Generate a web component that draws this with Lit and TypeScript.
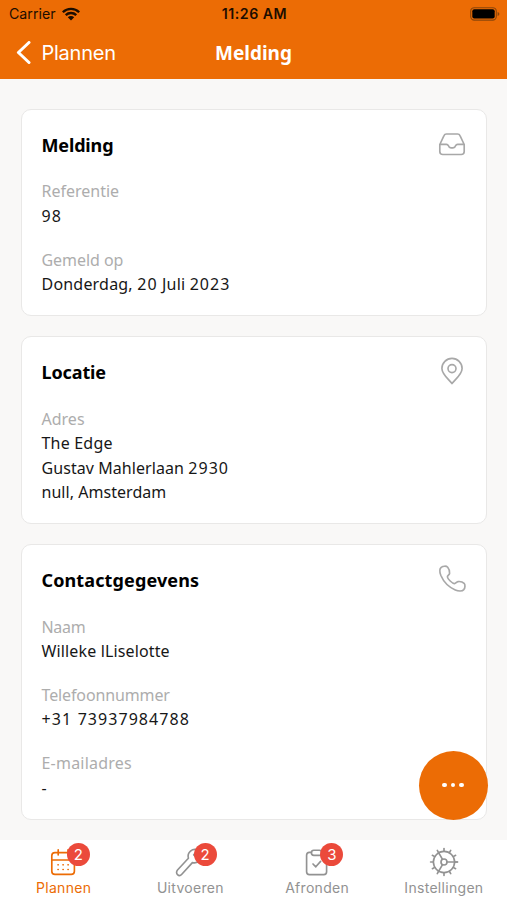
import { LitElement, html, css, svg } from "lit";
import { customElement, property } from "lit/decorators.js";
import { classMap } from "lit/directives/class-map.js";
import { styleMap } from "lit/directives/style-map.js";

/** A run of text with its tracking in pixels. */
interface Run { text: string; track: number }
interface Field { label: Run; lines: Run[] }
interface Section { title: Run; icon: string; fields: Field[] }
interface Tab { label: string; icon: string; badge?: number; active?: boolean }

const run = (text: string, track = 0): Run => ({ text, track });

const sections: Section[] = [
  {
    title: run("Melding", -0.15), icon: "inbox", fields: [
      { label: run("Referentie"), lines: [run("98")] },
      { label: run("Gemeld op", -0.05), lines: [run("Donderdag, 20 Juli 2023", 0.2)] },
    ],
  },
  {
    title: run("Locatie", -0.12), icon: "pin", fields: [
      { label: run("Adres"), lines: [run("The Edge", 0.2), run("Gustav Mahlerlaan 2930", 0.07), run("null, Amsterdam", 0.04)] },
    ],
  },
  {
    title: run("Contactgegevens", 0.12), icon: "phone", fields: [
      { label: run("Naam", -0.3), lines: [run("Willeke lLiselotte", 0.14)] },
      { label: run("Telefoonnummer", -0.12), lines: [run("+31 73937984788", 1.2)] },
      { label: run("E-mailadres", 0.22), lines: [run("-")] },
    ],
  },
];

const tabs: Tab[] = [
  { label: "Plannen", icon: "calendar", badge: 2, active: true },
  { label: "Uitvoeren", icon: "wrench", badge: 2 },
  { label: "Afronden", icon: "clipboard", badge: 3 },
  { label: "Instellingen", icon: "gear" },
];

const teeth = Array.from({ length: 12 }, (_, i) => i * 30);

const icons: Record<string, unknown> = {
  inbox: svg`<path d="M1.8 14.5 6 5.6Q6.7 4 8.4 4H19.6Q21.3 4 22 5.6L26.2 14.5V21.5Q26.2 24.5 23.2 24.5H4.8Q1.8 24.5 1.8 21.5ZM1.8 14.3H8.4Q9.8 14.3 10.3 15.6Q11 17.9 13 17.9H15Q17 17.9 17.7 15.6Q18.2 14.3 19.6 14.3H26.2"/>`,
  pin: svg`<path d="M14 26.6C11 22.5 3.9 17.2 3.9 11.4A10.1 10 0 0 1 24.1 11.4C24.1 17.2 17 22.5 14 26.6Z"/><circle cx="14" cy="11.6" r="4"/>`,
  phone: svg`<path d="M3.2 2.3C5 .9 8.4 .8 9.7 2.2C11 3.8 11.8 6.5 11.6 8.3C11.4 10 9.2 10.4 9.4 12C9.7 14.1 14.2 18.4 16.4 18.6C17.9 18.7 18.3 16.8 20 16.6C22 16.4 24.9 17.1 26.1 18.3C27.4 19.8 27.2 22.9 25.8 24.6C24.3 26.3 20.5 26.4 17.3 25C10.4 21.9 5.7 17.1 2.9 10.5C1.6 7.2 1.5 3.7 3.2 2.3Z"/>`,
  calendar: svg`<rect x="2.8" y="4.6" width="22.6" height="21.8" rx="3.2"/><path d="M2.8 12H25.4M9.2 1.8V7M19 1.8V7"/><path d="M9 16.8h.2m4.8 0h.2m4.8 0h.2M9 21.5h.2m4.8 0h.2m4.8 0h.2"/>`,
  wrench: svg`<path d="M24.6 4.8 20.2 9.1 17.7 6.8 21.9 2.1C16.4-.1 10.8 4.2 12.4 10.3L1.5 22C.2 23.5.3 25.6 1.5 26.6C2.8 27.8 4.6 27.6 5.8 26.3L16.4 14.6C22.6 16 27 10.5 24.6 4.8Z"/>`,
  clipboard: svg`<path d="M8.4 4.4H6.4Q3.6 4.4 3.6 7.2V23.8Q3.6 26.6 6.4 26.6H20.8Q23.6 26.6 23.6 23.8V7.2Q23.6 4.4 20.8 4.4H18.8"/><path d="M10.8 2.2H16.4Q18.8 2.2 18.8 4.8T16.4 7.4H10.8Q8.4 7.4 8.4 4.8T10.8 2.2ZM10 16 12.8 18.8 17.6 13.4"/>`,
  gear: svg`<circle cx="14" cy="14" r="10.6"/><circle cx="14" cy="14" r="3"/><path d="M17 14H27.5M12.5 11.4 8.6 4.6M12.5 16.6 8.6 23.4"/>
    ${teeth.map((a) => svg`<path d="M24.8 14H27.4" transform="rotate(${a} 14 14)"/>`)}`,
};

@customElement("line-icon")
class LineIcon extends LitElement {
  @property() name = "";
  static styles = css`
    :host { display: block; width: 28px; height: 28px; }
    svg { display: block; width: 100%; height: 100%; overflow: visible; fill: none; stroke: currentColor; stroke-width: 1.65; stroke-linecap: round; stroke-linejoin: round; }
  `;
  render() { return html`<svg viewBox="0 0 28 28">${icons[this.name]}</svg>`; }
}

@customElement("info-card")
class InfoCard extends LitElement {
  @property({ attribute: false }) section!: Section;
  static styles = css`
    :host { display: block; box-sizing: border-box; background: #fff; border: 1px solid #e9e8e7; border-radius: 10px; padding: 23.4px 20.5px 18.4px 20px; font: 450 16px/24.45px "Noto Sans", sans-serif; color: #171717; }
    .head { display: flex; justify-content: space-between; height: 24.4px; margin-bottom: 21.9px; }
    .title { font-size: 18px; font-weight: 700; color: #000; }
    .icon { color: #a8a8a8; margin-top: -3px; }
    .fields { display: flex; flex-direction: column; gap: 19.5px; }
    .label { color: #adadad; }
    .digits { letter-spacing: 1.05px; }
  `;
  private text(r: Run, cls: string) {
    const parts = r.text.split(/(\d+)/).filter(Boolean);
    return html`<div class=${cls} style=${styleMap({ letterSpacing: `${r.track}px` })}>${parts.map((p) => (/^\d/.test(p) ? html`<span class="digits">${p}</span>` : p))}</div>`;
  }
  render() {
    const { title, icon, fields } = this.section;
    return html`
      <div class="head">${this.text(title, "title")}<line-icon class="icon" name=${icon}></line-icon></div>
      <div class="fields">
        ${fields.map((f) => html`<div>${this.text(f.label, "label")}${f.lines.map((l) => this.text(l, "value"))}</div>`)}
      </div>`;
  }
}

@customElement("tab-item")
class TabItem extends LitElement {
  @property({ attribute: false }) tab!: Tab;
  static styles = css`
    .tab { display: flex; flex-direction: column; align-items: center; padding-top: 8px; color: #929292; font: 14px/18px Inter, sans-serif; letter-spacing: 0.3px; }
    .active { color: #ec6c05; }
    .wrap { position: relative; height: 31px; }
    .badge { position: absolute; left: 17.5px; top: -5px; width: 23px; height: 23px; border-radius: 50%; background: #eb4a3b; color: #fff; font-size: 15px; line-height: 23px; text-align: center; letter-spacing: 0; }
    .label { white-space: nowrap; padding-left: 0.5px; }
  `;
  render() {
    const t = this.tab;
    return html`<div class=${classMap({ tab: true, active: !!t.active })}>
      <div class="wrap"><line-icon name=${t.icon}></line-icon>${t.badge ? html`<div class="badge">${t.badge}</div>` : ""}</div>
      <div class="label">${t.label}</div>
    </div>`;
  }
}

@customElement("app-root")
class AppRoot extends LitElement {
  static styles = css`
    :host { display: flex; flex-direction: column; position: relative; width: 507px; height: 900px; overflow: hidden; background: #f9f8f7; font-family: Inter, sans-serif; }
    .top { flex: none; height: 79px; background: #ec6c05; }
    .status { display: grid; grid-template-columns: 1fr auto 1fr; align-items: center; height: 27px; padding: 0 7px 0 9px; color: #1c0d00; font-size: 14.2px; }
    .carrier { display: flex; align-items: center; gap: 6px; }
    .time { font-weight: 600; letter-spacing: 0.5px; }
    .battery { justify-self: end; }
    .nav { display: grid; grid-template-columns: 1fr auto 1fr; align-items: center; height: 52px; padding: 0 16px; color: #fff; }
    .back { display: flex; align-items: center; gap: 9.5px; font-size: 20px; letter-spacing: -0.25px; }
    .heading { font: 700 19px/26px "Noto Sans", sans-serif; }
    .content { flex: 1; min-height: 0; display: flex; flex-direction: column; gap: 20px; padding: 29.6px 19.8px 0 20.5px; }
    .tabs { flex: none; display: grid; grid-template-columns: repeat(4, 1fr); height: 60.5px; background: #fff; }
    .fab { position: absolute; left: 418.5px; top: 750.5px; width: 69px; height: 69px; border-radius: 50%; background: #ec6c05; display: flex; align-items: center; justify-content: center; gap: 3.8px; }
    .dot { width: 4.9px; height: 4.9px; border-radius: 50%; background: #fff; }
    svg { display: block; }
  `;
  render() {
    return html`
      <div class="top">
        <div class="status">
          <div class="carrier">Carrier
            <svg width="18" height="14" viewBox="0 0 18 14" fill="#1c0d00"><path d="M0 4.4A12.8 12.8 0 0 1 18 4.4L16.3 6.1A10.4 10.4 0 0 0 1.7 6.1ZM2.9 7.3A8.7 8.7 0 0 1 15.1 7.3L13.4 9A6.2 6.2 0 0 0 4.6 9ZM5.8 10.2A4.6 4.6 0 0 1 12.2 10.2L9 13.4Z"/></svg>
          </div>
          <div class="time">11:26 AM</div>
          <svg class="battery" width="30" height="14" viewBox="0 0 30 14"><rect x=".7" y=".7" width="25.6" height="12.4" rx="3.6" fill="none" stroke="#8a450b" stroke-width="1.1"/><rect x="2.3" y="2.3" width="22.4" height="9.2" rx="2" fill="#000"/><path d="M27.6 5V9Q29.4 8.5 29.4 7T27.6 5Z" fill="#8a450b"/></svg>
        </div>
        <div class="nav">
          <div class="back"><svg width="16" height="24" viewBox="0 0 16 24" fill="none" stroke="#fff" stroke-width="3" stroke-linecap="round" stroke-linejoin="round"><path d="M13 1.5 2.4 11.5 13 21.5"/></svg>Plannen</div>
          <div class="heading">Melding</div>
        </div>
      </div>
      <div class="content">${sections.map((s) => html`<info-card .section=${s}></info-card>`)}</div>
      <div class="tabs">${tabs.map((t) => html`<tab-item .tab=${t}></tab-item>`)}</div>
      <div class="fab"><div class="dot"></div><div class="dot"></div><div class="dot"></div></div>`;
  }
}
